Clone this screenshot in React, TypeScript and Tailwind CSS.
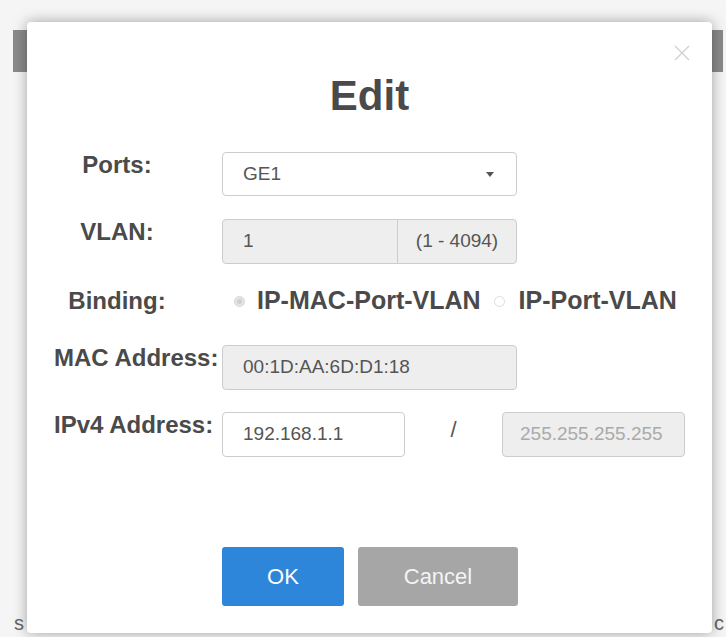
const sans = "font-['Liberation_Sans',Arial,sans-serif]";

function Label({ children }: { children: string }) {
  return (
    <div className="w-[126px] shrink-0 whitespace-nowrap text-center text-[24px] font-bold leading-[26px] text-[#4a4a4a]">
      {children}
    </div>
  );
}

export default function App() {
  return (
    <div className={`relative h-[637px] w-[726px] overflow-hidden bg-[#f5f5f5] pl-[27px] pt-[22px] ${sans}`}>
      {/* page behind the overlay */}
      <div className="absolute left-[13px] top-[30px] h-[42px] w-[16px] bg-[#8a8a8a]" />
      <div className="absolute left-[708px] top-[30px] h-[42px] w-[15px] bg-[#8a8a8a]" />
      <span className="absolute left-[14px] top-[608px] text-[20px] text-[#666]">s</span>
      <span className="absolute left-[714px] top-[608px] text-[20px] text-[#666]">c</span>

      <div className="relative h-[611px] w-[685px] rounded-[4px] bg-white shadow-[0_0_14px_rgba(0,0,0,0.35)]">
        <button className="absolute right-[22px] top-[23px] h-[16px] w-[16px]">
          <svg viewBox="0 0 16 16" className="h-[16px] w-[16px]" fill="none" stroke="#cfcfcf" strokeWidth="1.3">
            <path d="M1 1L15 15M15 1L1 15" />
          </svg>
        </button>

        <h1 className="pt-[50px] text-center text-[42px] font-bold leading-[48px] text-[#4a4a4a]">Edit</h1>

        <div className="mt-[32px] flex flex-col pl-[27px]">
          {/* Ports */}
          <div className="flex items-start gap-[42px]">
            <Label>Ports:</Label>
            <div className="flex h-[44px] w-[295px] items-center justify-between rounded-[4px] border border-[#cccccc] bg-white pl-[20px] pr-[22px] text-[19px] text-[#555]">
              <span>GE1</span>
              <span className="h-0 w-0 border-x-[4px] border-t-[5px] border-x-transparent border-t-[#555]" />
            </div>
          </div>

          {/* VLAN */}
          <div className="mt-[23px] flex items-start gap-[42px]">
            <Label>VLAN:</Label>
            <div className="flex h-[45px] w-[295px] overflow-hidden rounded-[4px] border border-[#cccccc] bg-[#eeeeee] text-[19px] text-[#555]">
              <div className="flex w-[175px] items-center border-r border-[#cccccc] pl-[20px]">1</div>
              <div className="flex flex-1 items-center justify-center">(1 - 4094)</div>
            </div>
          </div>

          {/* Binding */}
          <div className="mt-[24px] flex h-[26px] items-center gap-[42px]">
            <Label>Binding:</Label>
            <div className="flex items-center whitespace-nowrap pl-[12px] text-[25px] font-bold text-[#4a4a4a]">
              <span className="flex h-[11px] w-[11px] items-center justify-center rounded-full border border-[#d8d8d8] bg-[#e4e4e4]">
                <span className="h-[5px] w-[5px] rounded-full bg-[#cfcfcf]" />
              </span>
              <span className="ml-[12px]">IP-MAC-Port-VLAN</span>
              <span className="ml-[13px] h-[11px] w-[11px] rounded-full border border-[#dddddd] bg-white" />
              <span className="ml-[14px]">IP-Port-VLAN</span>
            </div>
          </div>

          {/* MAC */}
          <div className="mt-[31px] flex items-start gap-[42px]">
            <Label>MAC Address:</Label>
            <div className="flex h-[45px] w-[295px] items-center rounded-[4px] border border-[#cccccc] bg-[#eeeeee] pl-[20px] text-[19px] text-[#555]">
              00:1D:AA:6D:D1:18
            </div>
          </div>

          {/* IPv4 */}
          <div className="mt-[22px] flex items-start gap-[42px]">
            <Label>IPv4 Address:</Label>
            <div className="flex items-start">
              <div className="flex h-[45px] w-[183px] items-center rounded-[4px] border border-[#cccccc] bg-white pl-[20px] text-[19px] text-[#555]">
                192.168.1.1
              </div>
              <div className="mt-[7px] w-[97px] text-center text-[22px] leading-[22px] text-[#555]">/</div>
              <div className="flex h-[45px] w-[183px] items-center rounded-[4px] border border-[#cccccc] bg-[#eeeeee] pl-[17px] text-[19px] text-[#aaaaaa]">
                255.255.255.255
              </div>
            </div>
          </div>

          {/* Buttons */}
          <div className="mt-[90px] flex gap-[14px] pl-[168px]">
            <button className="h-[59px] w-[122px] rounded-[3px] bg-[#2d86d9] text-[22px] text-white">OK</button>
            <button className="h-[59px] w-[160px] rounded-[3px] bg-[#a6a6a6] text-[22px] text-[#f4f4f4]">Cancel</button>
          </div>
        </div>
      </div>
    </div>
  );
}
